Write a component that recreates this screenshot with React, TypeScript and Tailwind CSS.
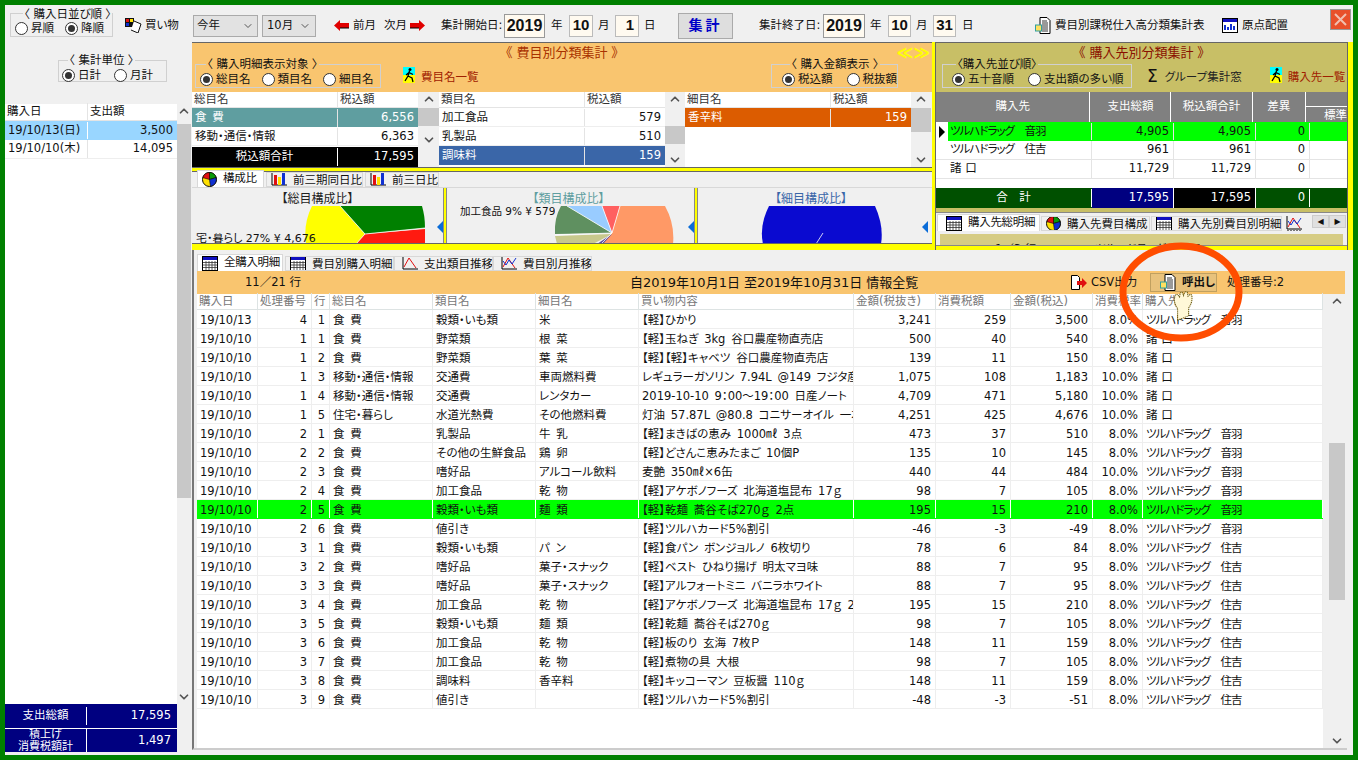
import { ChevronDown, ChevronUp } from "lucide-react"

const colWidths = ["w-[61px]", "w-[54px]", "w-[18px]", "w-[103px]", "w-[103px]", "w-[103px]", "w-[215px]", "w-[82px]", "w-[75px]", "w-[82px]", "w-[50px]", "w-[180px]"]
const rightCols = [1, 2, 7, 8, 9, 10]
const headers = ["購入日", "処理番号", "行", "総目名", "類目名", "細目名", "買い物内容", "金額(税抜き)", "消費税額", "金額(税込)", "消費税率", "購入先"]

const OTOWA = "ツルハドラッグ　音羽"
const SUMI = "ツルハドラッグ　住吉"
const SHO = "諸\u2002口"
const FOOD = "食\u2002費"
const MOVE = "移動・通信・情報"
const dateBox = "flex shrink-0 items-center border bg-[#fffaf0] font-['Liberation_Sans'] font-bold"

const rows: string[][] = [
  ["19/10/13", "4", "1", FOOD, "穀類・いも類", "米", "【軽】ひかり", "3,241", "259", "3,500", "8.0%", OTOWA],
  ["19/10/10", "1", "1", FOOD, "野菜類", "根\u2002菜", "【軽】玉ねぎ 3kg 谷口農産物直売店", "500", "40", "540", "8.0%", SHO],
  ["19/10/10", "1", "2", FOOD, "野菜類", "葉\u2002菜", "【軽】【軽】キャベツ 谷口農産物直売店", "139", "11", "150", "8.0%", SHO],
  ["19/10/10", "1", "3", MOVE, "交通費", "車両燃料費", "レギュラーガソリン 7.94L @149 フジタ産業 商", "1,075", "108", "1,183", "10.0%", SHO],
  ["19/10/10", "1", "4", MOVE, "交通費", "レンタカー", "2019-10-10 9：00～19：00 日産ノート", "4,709", "471", "5,180", "10.0%", SHO],
  ["19/10/10", "1", "5", "住宅・暮らし", "水道光熱費", "その他燃料費", "灯油 57.87L @80.8 コニサーオイル 一本松", "4,251", "425", "4,676", "10.0%", SHO],
  ["19/10/10", "2", "1", FOOD, "乳製品", "牛\u2002乳", "【軽】まきばの恵み 1000㎖ 3点", "473", "37", "510", "8.0%", OTOWA],
  ["19/10/10", "2", "2", FOOD, "その他の生鮮食品", "鶏\u2002卵", "【軽】どさんこ恵みたまご 10個P", "135", "10", "145", "8.0%", OTOWA],
  ["19/10/10", "2", "3", FOOD, "嗜好品", "アルコール飲料", "麦艶 350㎖×6缶", "440", "44", "484", "10.0%", OTOWA],
  ["19/10/10", "2", "4", FOOD, "加工食品", "乾\u2002物", "【軽】アケボノフーズ 北海道塩昆布 17ｇ", "98", "7", "105", "8.0%", OTOWA],
  ["19/10/10", "2", "5", FOOD, "穀類・いも類", "麺\u2002類", "【軽】乾麺 蕎谷そば270ｇ 2点", "195", "15", "210", "8.0%", OTOWA],
  ["19/10/10", "2", "6", FOOD, "値引き", "", "【軽】ツルハカード5%割引", "-46", "-3", "-49", "8.0%", OTOWA],
  ["19/10/10", "3", "1", FOOD, "穀類・いも類", "パ\u2002ン", "【軽】食パン ボンジョルノ 6枚切り", "78", "6", "84", "8.0%", SUMI],
  ["19/10/10", "3", "2", FOOD, "嗜好品", "菓子・スナック", "【軽】ベスト ひねり揚げ 明太マヨ味", "88", "7", "95", "8.0%", SUMI],
  ["19/10/10", "3", "3", FOOD, "嗜好品", "菓子・スナック", "【軽】アルフォートミニ バニラホワイト", "88", "7", "95", "8.0%", SUMI],
  ["19/10/10", "3", "4", FOOD, "加工食品", "乾\u2002物", "【軽】アケボノフーズ 北海道塩昆布 17ｇ 2点", "195", "15", "210", "8.0%", SUMI],
  ["19/10/10", "3", "5", FOOD, "穀類・いも類", "麺\u2002類", "【軽】乾麺 蕎谷そば270ｇ", "98", "7", "105", "8.0%", SUMI],
  ["19/10/10", "3", "6", FOOD, "加工食品", "乾\u2002物", "【軽】板のり 玄海 7枚Ｐ", "148", "11", "159", "8.0%", SUMI],
  ["19/10/10", "3", "7", FOOD, "加工食品", "乾\u2002物", "【軽】煮物の具 大根", "98", "7", "105", "8.0%", SUMI],
  ["19/10/10", "3", "8", FOOD, "調味料", "香辛料", "【軽】キッコーマン 豆板醤 110ｇ", "148", "11", "159", "8.0%", SUMI],
  ["19/10/10", "3", "9", FOOD, "値引き", "", "【軽】ツルハカード5%割引", "-48", "-3", "-51", "8.0%", SUMI],
]

function Radio({ on, label }: { on?: boolean; label: string }) {
  return (
    <span className="flex items-center gap-[3px] whitespace-nowrap">
      <span className="flex h-[13px] w-[13px] shrink-0 items-center justify-center rounded-full border border-[#333] bg-white">
        {on && <span className="h-[7px] w-[7px] rounded-full bg-[#333]" />}
      </span>
      {label}
    </span>
  )
}

function Group({ title, className, children }: { title: string; className: string; children: React.ReactNode }) {
  return (
    <fieldset className={`min-w-0 shrink-0 border border-[#d0d0d0] ${className}`}>
      <legend className="ml-[8px] px-[1px] text-[11.5px] leading-[12px] whitespace-nowrap">{title}</legend>
      {children}
    </fieldset>
  )
}

function Scroll({ w, thumbTop, thumbH, className = "" }: { w: string; thumbTop: string; thumbH: string; className?: string }) {
  return (
    <div className={`flex shrink-0 flex-col items-center bg-[#f0f0f0] ${w} ${className}`}>
      <ChevronUp className="h-[14px] w-[14px] shrink-0 text-[#555]" strokeWidth={3} />
      <div className={`w-full shrink-0 ${thumbTop}`} />
      <div className={`w-full shrink-0 bg-[#c8c8c8] ${thumbH}`} />
      <div className="flex-1" />
      <ChevronDown className="h-[14px] w-[14px] shrink-0 text-[#555]" strokeWidth={3} />
    </div>
  )
}

function CalIcon() {
  return (
    <svg width="16" height="15" viewBox="0 0 16 15" className="shrink-0">
      <rect x="0.5" y="0.5" width="15" height="14" fill="#fff" stroke="#000" />
      <rect x="1" y="1" width="14" height="3" fill="#1010c0" />
      <path d="M1 6.5h14M1 9h14M1 11.5h14M4 5v9M7 5v9M10 5v9M13 5v9" stroke="#333" strokeWidth="0.8" />
    </svg>
  )
}

function PieIcon() {
  return (
    <svg width="15" height="15" viewBox="0 0 16 16" className="shrink-0">
      <circle cx="8" cy="8" r="7.5" fill="#ffe000" stroke="#000" />
      <path d="M8 8V.5A7.5 7.5 0 0 1 15 6Z" fill="#0a9a0a" stroke="#000" strokeWidth="0.6" />
      <path d="M8 8V.5A7.5 7.5 0 0 0 1 6Z" fill="#e01010" stroke="#000" strokeWidth="0.6" />
      <path d="M8 8L15 6A7.5 7.5 0 0 1 9 15.4Z" fill="#1030d0" stroke="#000" strokeWidth="0.6" />
    </svg>
  )
}

function BarIcon() {
  return (
    <svg width="16" height="17" viewBox="0 0 16 17" className="shrink-0">
      <path d="M1 0v14h15" fill="none" stroke="#000" />
      <rect x="3" y="4" width="3" height="10" fill="#e01010" />
      <rect x="7" y="6" width="3" height="8" fill="#ffe000" />
      <rect x="11" y="2" width="3" height="12" fill="#1030d0" />
      <path d="M1 16h15" stroke="#000" strokeDasharray="2 1" />
    </svg>
  )
}

function LineIcon({ multi }: { multi?: boolean }) {
  return (
    <svg width="16" height="17" viewBox="0 0 16 17" className="shrink-0">
      <path d="M1 0v14h15" fill="none" stroke="#000" />
      <path d="M2 12L7 3l7 10" fill="none" stroke="#e01010" />
      {multi && <path d="M2 6l3 4 3-5 3 4 4-6" fill="none" stroke="#1030d0" />}
      <path d="M1 16h15" stroke="#000" strokeDasharray="2 1" />
    </svg>
  )
}

function Runner() {
  return (
    <svg width="12" height="16" viewBox="0 0 12 16" className="shrink-0">
      <rect width="12" height="8" fill="#00ffff" />
      <rect y="8" width="12" height="8" fill="#ffff00" />
      <circle cx="7" cy="2.5" r="1.5" fill="#000" />
      <path d="M6.5 4L5 9l-3 5M5 9l4 2 1 4M6 5.5L3 8M6 5.5l4 2" fill="none" stroke="#000" strokeWidth="1.3" />
    </svg>
  )
}

function DocIcon() {
  return (
    <svg width="16" height="17" viewBox="0 0 16 17" className="shrink-0">
      <path d="M5 .5h7l3 3v13H5Z" fill="#fff" stroke="#000" />
      <path d="M7 4h5M7 6h6M7 8h6M7 10h6M7 12h6M7 14h6" stroke="#000" strokeWidth="0.8" />
      <rect x="0.5" y="8" width="6" height="6" fill="#ffe060" stroke="#30a0a0" />
    </svg>
  )
}

function RedArrow({ left }: { left?: boolean }) {
  return (
    <svg width="15" height="11" viewBox="0 0 15 11" className={`shrink-0 ${left ? "" : "-scale-x-100"}`}>
      <path d="M0 5.5L6 0v3h9v5H6v3Z" fill="#e00000" />
      <path d="M6 8h9" stroke="#000" />
    </svg>
  )
}

function TabIcon({ active, icon, label, className }: { active?: boolean; icon: React.ReactNode; label: string; className: string }) {
  return (
    <div className={`flex shrink-0 items-center overflow-hidden whitespace-nowrap border border-[#d8d8d8] ${active ? "z-10 h-[17px] border-b-0 bg-white tracking-[-0.3px]" : "h-[15px] bg-[#f0f0f0] leading-[12px]"} ${className}`}>
      {icon}
      <span className="ml-[6px]">{label}</span>
    </div>
  )
}

function MiniTable({ name, rows: data, selected, color, total }: { name: string; rows: string[][]; selected: number; color: string; total?: string }) {
  return (
    <div className="flex h-full w-[226px] shrink-0 flex-col bg-white">
      <div className="flex h-[16px] shrink-0 items-center border-b border-[#e4e4e4] text-[#333]">
        <div className="w-[145px] pl-[2px]">{name}</div>
        <div className="flex-1 border-l border-[#e4e4e4] pl-[2px]">税込額</div>
      </div>
      {data.map((r, i) => (
        <div key={i} className={`flex h-[19px] shrink-0 items-center pt-[1px] ${i === selected ? color : "border-b border-[#eeeeee]"}`}>
          <div className="w-[145px] truncate pl-[3px]">{r[0]}</div>
          <div className="flex-1 border-l border-[#e4e4e4] pr-[4px] text-right">{r[1]}</div>
        </div>
      ))}
      {total && (
        <div className="mt-auto flex h-[20px] shrink-0 items-center bg-black text-white">
          <div className="w-[145px] text-center">税込額合計</div>
          <div className="flex-1 border-l border-white pr-[4px] text-right">{total}</div>
        </div>
      )}
    </div>
  )
}

function PiePanel({ title, titleColor, w, children, label }: { title: string; titleColor: string; w: string; children: React.ReactNode; label?: React.ReactNode }) {
  return (
    <div className={`relative flex shrink-0 flex-col ${w}`}>
      <div className={`flex h-[18px] items-end justify-center pr-[4px] text-[12px] leading-[14px] ${titleColor}`}>{title}</div>
      <svg className="h-[38px] w-full" preserveAspectRatio="xMinYMin">
        {children}
      </svg>
      {label}
      <svg width="6" height="12" viewBox="0 0 6 12" className="absolute right-0 top-[33px]">
        <path d="M6 0v12L0 6Z" fill="#0a6cd8" />
      </svg>
    </div>
  )
}

function Splitter() {
  return <div className="w-[4px] shrink-0 border-x border-[#888] bg-[#ffff00]" />
}

export default function App() {
  return (
    <div className="relative flex h-[760px] w-[1358px] flex-col overflow-hidden border-[5px] border-[#008000] bg-[#f0f0f0] font-['DejaVu_Sans','Noto_Sans_CJK_JP',sans-serif] text-[11.5px] text-[#111] [font-feature-settings:'palt']">
      {/* toolbar */}
      <div className="flex h-[37px] shrink-0 items-center pt-[4px]">
        <Group title="〈 購入日並び順 〉" className="mb-[7px] ml-[5px] flex h-[29px] w-[103px] gap-[11px] pl-[4px] pt-[2px]">
          <Radio label="昇順" />
          <Radio on label="降順" />
        </Group>
        <svg width="17" height="15" viewBox="0 0 17 15" className="ml-[12px] shrink-0">
          <rect width="9" height="9" fill="#111" />
          <rect x="1" y="1" width="3" height="3" fill="#e01010" />
          <rect x="5" y="1" width="3" height="3" fill="#ffe000" />
          <rect x="1" y="5" width="3" height="3" fill="#1030d0" />
          <path d="M9 3l7 3-3 9-7-3" fill="#fff" stroke="#111" />
        </svg>
        <span className="ml-[3px] w-[48px] whitespace-nowrap">買い物</span>
        <div className="flex h-[22px] w-[65px] shrink-0 items-center justify-between border border-[#aaa] bg-[#e2e2e2] px-[3px]">
          今年<ChevronDown className="h-[12px] w-[12px] text-[#555]" />
        </div>
        <div className="ml-[4px] flex h-[22px] w-[54px] shrink-0 items-center justify-between border border-[#aaa] bg-[#e2e2e2] px-[4px]">
          10月<ChevronDown className="h-[12px] w-[12px] text-[#555]" />
        </div>
        <div className="ml-[18px] flex w-[91px] shrink-0 items-center whitespace-nowrap">
          <RedArrow left />
          <span className="ml-[4px] w-[23px]">前月</span>
          <span className="ml-[8px] w-[23px]">次月</span>
          <span className="ml-[3px]"><RedArrow /></span>
        </div>
        <span className="ml-[16px] w-[63px] whitespace-nowrap">集計開始日:</span>
        <div className={`${dateBox} h-[24px] w-[41px] justify-center border-[#999] text-[16px]`}>2019</div>
        <span className="w-[24px] pl-[6px]">年</span>
        <div className={`${dateBox} h-[22px] w-[24px] justify-center border-[#bbb] text-[15px]`}>10</div>
        <span className="w-[22px] pl-[5px]">月</span>
        <div className={`${dateBox} h-[22px] w-[24px] justify-end border-[#bbb] pr-[4px] text-[15px]`}>1</div>
        <span className="w-[39px] pl-[5px]">日</span>
        <div className="flex h-[26px] w-[55px] shrink-0 items-center justify-center border border-[#aaa] bg-[#dedede] text-[14px] font-bold tracking-[3px] text-[#0000c8]">集計</div>
        <span className="ml-[26px] w-[64px] whitespace-nowrap">集計終了日:</span>
        <div className={`${dateBox} h-[24px] w-[42px] justify-center border-[#999] text-[16px]`}>2019</div>
        <span className="w-[23px] pl-[5px]">年</span>
        <div className={`${dateBox} h-[22px] w-[23px] justify-center border-[#bbb] text-[15px]`}>10</div>
        <span className="w-[22px] pl-[5px]">月</span>
        <div className={`${dateBox} h-[22px] w-[23px] justify-center border-[#bbb] text-[15px]`}>31</div>
        <span className="w-[79px] pl-[6px]">日</span>
        <DocIcon />
        <span className="ml-[4px] w-[167px] whitespace-nowrap">費目別課税仕入高分類集計表</span>
        <svg width="16" height="15" viewBox="0 0 16 15" className="shrink-0">
          <rect x="0.5" y="0.5" width="15" height="14" fill="#fff" stroke="#000" />
          <rect x="1" y="1" width="14" height="3" fill="#1010c0" />
          <path d="M3 12V7M6 12V9M9 12V6M12 12V8" stroke="#1030d0" strokeWidth="2" />
        </svg>
        <span className="ml-[4px] w-[88px] whitespace-nowrap">原点配置</span>
        <div className="mb-[13px] flex h-[21px] w-[21px] shrink-0 items-center justify-center border border-[#999] bg-[#e8502a] text-[#f0c0b0]">
          <svg width="15" height="15" viewBox="0 0 15 15">
            <path d="M2 2l11 11M13 2L2 13" stroke="currentColor" strokeWidth="2" />
          </svg>
        </div>
      </div>

      <div className="flex min-h-0 flex-1">
        {/* left column */}
        <div className="flex w-[187px] shrink-0 flex-col">
          <Group title="〈 集計単位 〉" className="ml-[53px] mt-[12px] flex h-[28px] w-[109px] gap-[13px] pl-[3px] pt-[1px] [&>legend]:ml-[6px]">
            <Radio on label="日計" />
            <Radio label="月計" />
          </Group>
          <div className="mt-[22px] flex min-h-0 flex-1">
            <div className="w-[172px] shrink-0 bg-white">
              <div className="flex h-[17px] items-center border-b border-[#e4e4e4]">
                <div className="w-[82px] pl-[2px]">購入日</div>
                <div className="border-l border-[#e4e4e4] pl-[2px]">支出額</div>
              </div>
              <div className="flex h-[19px] items-center bg-[#99d6ff]">
                <div className="w-[82px] whitespace-nowrap pl-[3px]">19/10/13(日)</div>
                <div className="flex-1 border-l border-white pr-[4px] text-right">3,500</div>
              </div>
              <div className="flex h-[19px] items-center border-b border-[#eeeeee]">
                <div className="w-[82px] whitespace-nowrap pl-[3px]">19/10/10(木)</div>
                <div className="flex-1 border-l border-[#e4e4e4] pr-[4px] text-right">14,095</div>
              </div>
            </div>
            <Scroll w="w-[14px]" thumbTop="h-[6px]" thumbH="h-[374px]" />
          </div>
          <div className="mb-[3px] w-[172px] bg-[#000080] text-white">
            <div className="flex h-[25px] items-center border-b border-white">
              <div className="w-[81px] text-center">支出総額</div>
              <div className="flex-1 border-l border-white pr-[6px] text-right">17,595</div>
            </div>
            <div className="flex h-[23px] items-center">
              <div className="w-[81px] text-center text-[11px] leading-[12px]">積上げ<br />消費税額計</div>
              <div className="flex h-full flex-1 items-center justify-end border-l border-white pr-[6px]">1,497</div>
            </div>
          </div>
        </div>

        {/* right column */}
        <div className="flex min-w-0 flex-1 flex-col">
          <div className="flex h-[208px] shrink-0 bg-[#ffff00]">
            {/* expense panel */}
            <div className="flex w-[740px] shrink-0 flex-col">
              <div className="relative flex h-[50px] shrink-0 flex-col border-t border-[#666] bg-[#f9c56f]">
                <div className="h-[15px] pt-[1px] text-center text-[13px] leading-[17px] text-[#a83200]">《 費目別分類集計 》</div>
                <div className="flex items-start">
                  <Group title="〈 購入明細表示対象 〉" className="ml-[3px] flex h-[30px] w-[186px] gap-[11px] pl-[4px] pt-[2px] [&>legend]:ml-[6px]">
                    <Radio on label="総目名" />
                    <Radio label="類目名" />
                    <Radio label="細目名" />
                  </Group>
                  <div className="ml-[22px] mt-[9px]"><Runner /></div>
                  <span className="ml-[6px] mt-[11px] w-[350px] text-[#a02000]">費目名一覧</span>
                  <Group title="〈 購入金額表示 〉" className="flex h-[30px] w-[127px] gap-[14px] pl-[10px] pt-[2px]">
                    <Radio on label="税込額" />
                    <Radio label="税抜額" />
                  </Group>
                </div>
                <span className="absolute right-[2px] top-[1px] text-[16px] leading-[18px] font-bold text-[#ffff00]">≪≫</span>
              </div>
              <div className="flex h-[75px] shrink-0 bg-[#f0f0f0]">
                <MiniTable name="総目名" selected={0} color="bg-[#5f9ea0] text-white" total="17,595" rows={[["食\u2002費", "6,556"], ["移動・通信・情報", "6,363"]]} />
                <Scroll w="w-[21px]" thumbTop="h-[2px]" thumbH="h-[18px]" className="h-[55px]" />
                <MiniTable name="類目名" selected={2} color="bg-[#3a66a8] text-white" rows={[["加工食品", "579"], ["乳製品", "510"], ["調味料", "159"]]} />
                <Scroll w="w-[20px]" thumbTop="h-[20px]" thumbH="h-[18px]" />
                <MiniTable name="細目名" selected={0} color="bg-[#dc5c00] text-white" rows={[["香辛料", "159"]]} />
                <Scroll w="w-[20px]" thumbTop="h-[2px]" thumbH="h-[24px]" />
              </div>
              <div className="h-[5px] shrink-0 border-y border-[#666]" />
              <div className="flex h-[15px] shrink-0 items-end gap-[2px] bg-[#f0f0f0] pl-[5px]">
                <TabIcon active icon={<span className="ml-[4px]"><PieIcon /></span>} label="構成比" className="w-[67px]" />
                <TabIcon icon={<span className="ml-[4px]"><BarIcon /></span>} label="前三期同日比" className="w-[97px]" />
                <TabIcon icon={<span className="ml-[4px]"><BarIcon /></span>} label="前三日比" className="w-[74px]" />
              </div>
              <div className="flex h-[56px] shrink-0 border-t border-[#d8d8d8] bg-[#f0f0f0] pl-[4px]">
                <PiePanel
                  title="【総目構成比】"
                  titleColor="text-[#222]"
                  w="w-[247px]"
                  label={<div className="absolute bottom-0 left-0 h-[10px] overflow-hidden whitespace-nowrap text-[11px] leading-[12px]">宅・暮らし 27% ¥ 4,676</div>}
                >
                  <path d="M144 0L169 28L160 38L110 38Q107 18 116 0Z" fill="#ffff00" />
                  <path d="M144 0L226 0Q229 10 229 22L169 28Z" fill="#008000" />
                  <path d="M169 28L229 23L229 38L160 38Z" fill="#ff1a10" />
                  <path d="M144 0L169 28L229 22M169 28L160 38" fill="none" stroke="#fff" strokeWidth="0.8" />
                </PiePanel>
                <Splitter />
                <PiePanel
                  title="【類目構成比】"
                  titleColor="text-[#5f9ea0]"
                  w="w-[247px]"
                  label={<div className="absolute left-[13px] top-[18px] h-[10px] overflow-hidden whitespace-nowrap text-[10.5px] leading-[10px]">加工食品 9% ¥ 579</div>}
                >
                  <path d="M173 0L218 0Q228 18 226 38L154 38L165 27Z" fill="#ff9966" />
                  <path d="M155 0L173 0L165 27Z" fill="#ff6060" />
                  <path d="M120 0L155 0L165 27Z" fill="#99ccff" />
                  <path d="M120 0L165 27L108 28Q107 12 114 0Z" fill="#5f9060" />
                  <path d="M108 30L165 28L146 38L110 38Z" fill="#c8c88c" />
                  <path d="M165 28L150 38L156 38Z" fill="#6050a0" />
                  <path d="M120 0L165 27L108 29M165 27L173 0M165 27L155 0M165 27L154 38" fill="none" stroke="#fff" strokeWidth="0.8" />
                </PiePanel>
                <Splitter />
                <PiePanel title="【細目構成比】" titleColor="text-[#3a66a8]" w="w-[230px]">
                  <path d="M71 0L177 0Q186 20 183 38L65 38Q61 20 71 0Z" fill="#0a0ad0" />
                  <path d="M118 38L125 27" stroke="#fff" strokeWidth="0.8" />
                </PiePanel>
              </div>
              <div className="h-[4px] shrink-0 border-t border-[#666]" />
            </div>

            {/* vendor panel */}
            <div className="ml-[3px] flex w-[413px] shrink-0 flex-col overflow-hidden border-x border-[#666]">
              <div className="relative flex h-[50px] shrink-0 flex-col border-t border-[#666] bg-[#c8bf66]">
                <div className="h-[15px] pt-[1px] text-center text-[13px] leading-[17px] text-[#8a1000]">《 購入先別分類集計 》</div>
                <div className="flex items-start whitespace-nowrap">
                  <Group title="〈購入先並び順〉" className="ml-[6px] flex h-[30px] w-[190px] gap-[14px] pl-[9px] pt-[2px] [&>legend]:ml-[4px]">
                    <Radio on label="五十音順" />
                    <Radio label="支出額の多い順" />
                  </Group>
                  <span className="ml-[15px] mt-[8px] text-[17px] leading-[20px]">Σ</span>
                  <span className="ml-[7px] mt-[11px] w-[105px] text-[#222]">グループ集計窓</span>
                  <div className="mt-[9px]"><Runner /></div>
                  <span className="ml-[6px] mt-[11px] text-[#a02000]">購入先一覧</span>
                </div>
              </div>
              <div className="flex h-[30px] shrink-0 bg-[#808080] text-white">
                <div className="flex w-[156px] items-center justify-center border-r border-white">購入先</div>
                <div className="flex w-[82px] items-center justify-center border-r border-white">支出総額</div>
                <div className="flex w-[82px] items-center justify-center border-r border-white">税込額合計</div>
                <div className="flex w-[54px] items-center justify-center border-r border-white">差異</div>
                <div className="flex-1">
                  <div className="h-[15px] border-b border-white" />
                  <div className="whitespace-nowrap pl-[18px]">標準</div>
                </div>
              </div>
              {[
                ["ツルハドラッグ　音羽", "4,905", "4,905", "0"],
                ["ツルハドラッグ　住吉", "961", "961", "0"],
                [SHO, "11,729", "11,729", "0"],
              ].map((r, i) => (
                <div key={i} className={`flex h-[19px] shrink-0 items-center ${i === 0 ? "bg-[#00ff00]" : "border-b border-[#e4e4e4] bg-white"}`}>
                  <div className="flex h-full w-[12px] items-center justify-center bg-white">
                    {i === 0 && <span className="h-0 w-0 border-y-[6px] border-l-[6px] border-y-transparent border-l-black" />}
                  </div>
                  <div className="w-[144px] truncate border-r border-[#e4e4e4] pl-[2px] tracking-[-1px]">{r[0]}</div>
                  <div className="w-[82px] border-r border-[#e4e4e4] pr-[4px] text-right">{r[1]}</div>
                  <div className="w-[82px] border-r border-[#e4e4e4] pr-[4px] text-right">{r[2]}</div>
                  <div className="w-[54px] border-r border-[#e4e4e4] pr-[4px] text-right">{r[3]}</div>
                </div>
              ))}
              <div className="h-[9px] shrink-0 bg-white" />
              <div className="flex h-[20px] shrink-0 items-center bg-[#005000] text-white">
                <div className="w-[156px] border-r border-white text-center">合　計</div>
                <div className="flex h-full w-[82px] items-center justify-end border-r border-white bg-[#000080] pr-[4px]">17,595</div>
                <div className="flex h-full w-[82px] items-center justify-end border-r border-white bg-black pr-[4px]">17,595</div>
                <div className="w-[54px] border-r border-white pr-[4px] text-right">0</div>
              </div>
              <div className="h-[5px] shrink-0 border-b border-[#888] bg-[#c8bf66]" />
              <div className="flex h-[18px] shrink-0 items-end gap-[1px] overflow-hidden bg-[#f0f0f0] pl-[1px]">
                <TabIcon active icon={<span className="ml-[8px]"><CalIcon /></span>} label="購入先総明細" className="w-[103px]" />
                <TabIcon icon={<span className="ml-[4px]"><PieIcon /></span>} label="購入先費目構成" className="w-[109px]" />
                <TabIcon icon={<span className="ml-[4px]"><CalIcon /></span>} label="購入先別費目別明細" className="w-[131px]" />
                <div className="ml-[3px] flex h-[15px] w-[25px] shrink-0 items-center overflow-hidden text-[#1030d0]"><LineIcon multi /></div>
                <div className="mb-[3px] flex h-[13px] shrink-0 text-[8px] leading-[12px]">
                  <span className="w-[17px] border border-[#ccc] bg-[#e0e0e0] text-center">◀</span>
                  <span className="w-[17px] border border-[#ccc] bg-[#e0e0e0] text-center">▶</span>
                </div>
              </div>
              <div className="h-[14px] shrink-0 bg-[#f0f0f0] px-[4px] pt-[3px]">
                <div className="flex h-[11px] overflow-hidden bg-[#d6cc84] pt-[8px] leading-[14px]">
                  <span className="ml-[55px] w-[100px]">1／3 行</span>
                  <span>ツルハドラッグ　音羽</span>
                </div>
              </div>
              <div className="flex-1 border-t border-[#888] bg-[#ffff00]" />
            </div>
          </div>

          {/* detail panel */}
          <div className="flex h-[500px] w-[1155px] shrink-0 flex-col border-b-2 border-l-2 border-[#777] border-b-[#cccccc] pl-[3px]">
            <div className="flex h-[21px] shrink-0 items-end gap-[2px]">
              <TabIcon active icon={<span className="ml-[4px]"><CalIcon /></span>} label="全購入明細" className="w-[86px]" />
              <div className="flex">
                <TabIcon icon={<span className="ml-[4px]"><CalIcon /></span>} label="費目別購入明細" className="w-[109px]" />
                <TabIcon icon={<span className="ml-[7px]"><LineIcon /></span>} label="支出類目推移" className="w-[99px]" />
                <TabIcon icon={<span className="ml-[7px]"><LineIcon multi /></span>} label="費目別月推移" className="w-[99px]" />
              </div>
            </div>
            <div className="flex h-[23px] w-[1148px] shrink-0 items-center whitespace-nowrap bg-[#f9c56f]">
              <span className="ml-[48px] w-[60px] shrink-0">11／21 行</span>
              <span className="ml-[325px] w-[290px] shrink-0 text-[13px]">自2019年10月1日 至2019年10月31日 情報全覧</span>
              <span className="ml-[151px] flex w-[64px] shrink-0 items-center gap-[4px]">
                <svg width="16" height="16" viewBox="0 0 16 16" className="shrink-0">
                  <path d="M.5.5h6l2 2v12H.5Z" fill="#fff" stroke="#000" />
                  <path d="M6 6h5V3l5 5-5 5v-3H6Z" fill="#e01010" />
                </svg>
                CSV出力
              </span>
              <span className="ml-[15px] flex h-[19px] w-[67px] shrink-0 items-center gap-[6px] border border-[#c0a060] bg-[#e8c27c] pl-[9px] font-bold">
                <DocIcon />呼出し
              </span>
              <span className="ml-[10px]">処理番号:2</span>
            </div>
            <div className="flex min-h-0 flex-1">
              <div className="w-[1126px] shrink-0 bg-white">
                <div className="flex h-[16px] items-center border-b border-[#dde3e3] text-[#777]">
                  {headers.map((h, i) => (
                    <div key={i} className={`shrink-0 overflow-hidden whitespace-nowrap border-r border-[#dde3e3] pl-[2px] ${colWidths[i]}`}>{h}</div>
                  ))}
                </div>
                {rows.map((r, i) => (
                  <div key={i} className={`flex h-[19px] items-center border-b ${i === 10 ? "border-[#00ff00] bg-[#00ff00]" : "border-[#eeeeee]"}`}>
                    {r.map((c, j) => (
                      <div key={j} className={`h-full shrink-0 overflow-hidden whitespace-nowrap border-r pt-[2px] leading-[16px] ${i === 10 ? "border-white" : "border-[#eeeeee]"} ${colWidths[j]} ${rightCols.includes(j) ? "pr-[4px] text-right" : "pl-[3px]"} ${j === 11 ? "tracking-[-1px]" : ""}`}>
                        {j === 6 ? c.replace(/ /g, "\u2002") : c}
                      </div>
                    ))}
                  </div>
                ))}
              </div>
              <Scroll w="w-[16px] ml-[6px]" thumbTop="h-[135px]" thumbH="h-[157px]" />
            </div>
          </div>
        </div>
      </div>

      {/* annotation over the page */}
      <svg width="140" height="110" viewBox="0 0 140 110" className="absolute left-[1106px] top-[232px]">
        <ellipse cx="70" cy="55" rx="58" ry="46" fill="none" stroke="#ff4d00" strokeWidth="7" />
        <g transform="translate(26.3 26.1) scale(.65)">
          <path d="M62 88V70q-7-9-4-20 2-3 5-1l2 3 1-6q2-2 4 0l1 4 2-5q2-2 4 0l1 6 3-3q3 0 3 3 1 10-5 18v12Z" fill="#fff8d8" stroke="#6b5a10" strokeWidth="1.6" strokeDasharray="2 1" />
        </g>
      </svg>
    </div>
  )
}
